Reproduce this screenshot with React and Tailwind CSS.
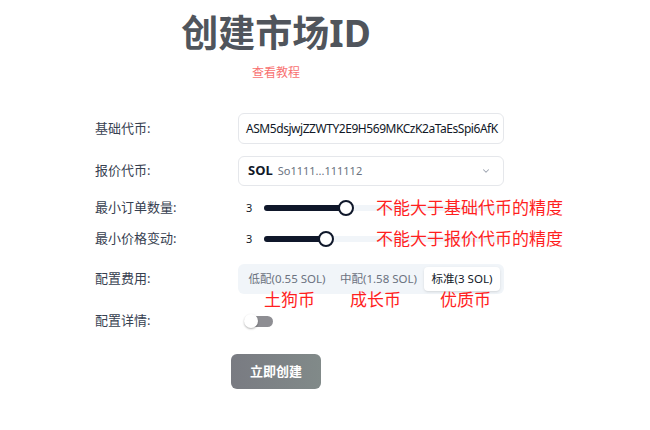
import { useState } from "react"

const cjk = { fontFamily: '"Noto Sans", "Noto Sans CJK SC", sans-serif' }

function Slider({ value }) {
  return (
    <div className="relative h-[15px] w-[240px] flex items-center">
      <div className="h-[6px] w-full rounded-full bg-[#f1f5f9]" />
      <div className="absolute left-0 h-[6px] rounded-full bg-[#0f172a]" style={{ width: value + "%" }} />
      <div
        className="absolute h-[16px] w-[16px] rounded-full border-2 border-[#0f172a] bg-white"
        style={{ left: `calc(${value}% - 8px)` }}
      />
    </div>
  )
}

function App() {
  const [fee, setFee] = useState(2)
  const fees = [
    { label: "低配(0.55 SOL)", w: "w-[92px]" },
    { label: "中配(1.58 SOL)", w: "w-[91px]" },
    { label: "标准(3 SOL)", w: "w-[76px]" },
  ]

  return (
    <div className="w-[650px] h-[430px] bg-white text-[#374151]" style={cjk}>
      <div className="ml-[182px] pt-[9px] w-[188px] flex flex-col items-center">
        <h1 className="text-[37px] leading-[48px] font-bold text-[#50555c] whitespace-nowrap">创建市场ID</h1>
        <a className="mt-[6px] text-[12px] leading-[20px] text-[#f87171]">查看教程</a>
      </div>

      <div className="ml-[95px] mt-[30px] w-[410px] relative">
        <div className="flex items-center h-[31px]">
          <div className="w-[143px] text-[13px]">基础代币:</div>
          <div className="w-[266px] h-[31px] border border-[#e5e7eb] rounded-md px-[7px] flex items-center overflow-hidden">
            <span className="text-[12px] tracking-[-0.45px] text-[#111827] whitespace-nowrap">ASM5dsjwjZZWTY2E9H569MKCzK2aTaEsSpi6AfK</span>
          </div>
        </div>

        <div className="flex items-center h-[30px] mt-[12px]">
          <div className="w-[143px] text-[13px]">报价代币:</div>
          <div className="w-[266px] h-[30px] border border-[#e5e7eb] rounded-md pl-[9px] pr-[12px] flex items-center">
            <span className="text-[13px] font-bold text-[#111827]">SOL</span>
            <span className="ml-[5px] text-[11px] text-[#6b7280]">So1111...111112</span>
            <svg className="ml-auto" width="10" height="10" viewBox="0 0 24 24" fill="none" stroke="#9ca3af" strokeWidth="2.5" strokeLinecap="round" strokeLinejoin="round">
              <path d="m6 9 6 6 6-6" />
            </svg>
          </div>
        </div>

        <div className="flex items-center h-[24px] mt-[10px]">
          <div className="w-[151px] text-[13px]">最小订单数量:</div>
          <div className="w-[18px] text-[11px] text-[#111827]">3</div>
          <Slider value={34} />
          <span className="absolute left-[281px] text-[17px] text-[#ff1f1f] whitespace-nowrap">不能大于基础代币的精度</span>
        </div>

        <div className="flex items-center h-[24px] mt-[7px]">
          <div className="w-[151px] text-[13px]">最小价格变动:</div>
          <div className="w-[18px] text-[11px] text-[#111827]">3</div>
          <Slider value={26} />
          <span className="absolute left-[281px] text-[17px] text-[#ff1f1f] whitespace-nowrap">不能大于报价代币的精度</span>
        </div>

        <div className="flex items-center h-[30px] mt-[13px]">
          <div className="w-[143px] text-[13px]">配置费用:</div>
          <div className="w-[266px] h-[30px] bg-[#f1f5f9] rounded-md p-[3px] flex items-center">
            {fees.map((f, i) => (
              <button
                key={f.label}
                onClick={() => setFee(i)}
                className={
                  i === fee
                    ? `${f.w} h-[24px] rounded-[4px] bg-white text-[11.5px] text-[#111827] shadow-sm whitespace-nowrap`
                    : `${f.w} h-[24px] text-[11.5px] text-[#6b7280] whitespace-nowrap`
                }
              >
                {f.label}
              </button>
            ))}
          </div>
        </div>

        <div className="flex h-[0px] text-[17px] text-[#ff1f1f] relative">
          <span className="absolute left-[169px] top-[-6px] leading-[24px]">土狗币</span>
          <span className="absolute left-[255px] top-[-6px] leading-[24px]">成长币</span>
          <span className="absolute left-[345px] top-[-6px] leading-[24px]">优质币</span>
        </div>

        <div className="flex items-center h-[20px] mt-[17px]">
          <div className="w-[150px] text-[13px]">配置详情:</div>
          <div className="relative w-[28px] h-[11px] rounded-full bg-[#8e8e93] flex items-center">
            <div className="absolute left-[-1px] h-[14px] w-[14px] rounded-full bg-white shadow-[0_1px_2px_rgba(0,0,0,0.3)]" />
          </div>
        </div>

        <button className="ml-[136px] mt-[23px] w-[90px] h-[35px] rounded-md bg-gradient-to-r from-[#797b82] to-[#818a89] text-white text-[13px] font-bold">
          立即创建
        </button>
      </div>
    </div>
  )
}

export default App
